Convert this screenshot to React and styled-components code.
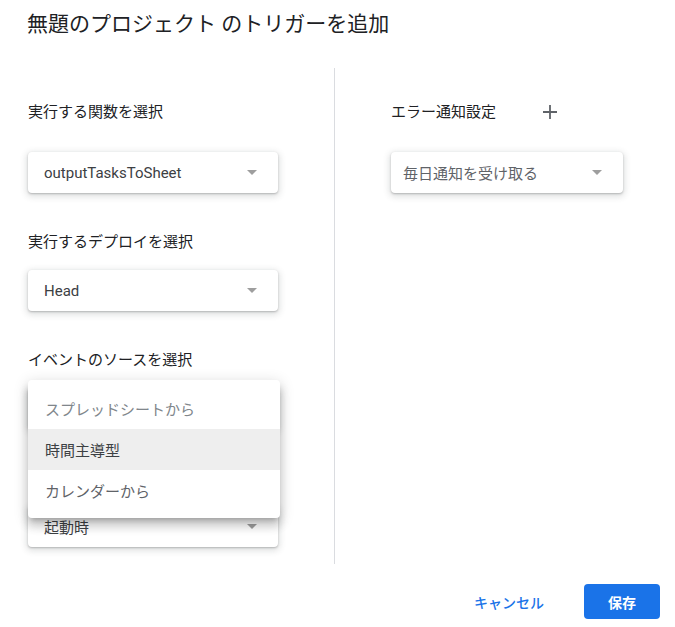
import styled, { createGlobalStyle } from "styled-components";

const GlobalStyle = createGlobalStyle`
    body {
        margin: 0;
        background: #fff;
        font-family: Roboto, "Noto Sans CJK JP", sans-serif;
        color: #202124;
    }
`;

const Dialog = styled.div`
    width: 675px;
    height: 627px;
    box-sizing: border-box;
    padding: 11px 15px 8px 27px;
    display: flex;
    flex-direction: column;
`;

const Title = styled.h2`
    margin: 0;
    font-size: 21px;
    line-height: 27px;
    font-weight: 400;
    color: #202124;
`;

const Body = styled.div`
    display: flex;
    margin-top: 30px;
`;

const Column = styled.div`
    display: flex;
    flex-direction: column;
    width: ${(p) => p.width}px;
    padding: 24px 0 17px ${(p) => p.inset || 0}px;
    box-sizing: border-box;
`;

const Divider = styled.div`
    width: 1px;
    background: #dadce0;
`;

const Field = styled.div`
    display: flex;
    flex-direction: column;
    gap: ${(p) => (p.first ? 20 : 18)}px;
    margin-top: ${(p) => (p.first ? 0 : 37)}px;
    position: relative;
`;

const LabelRow = styled.div`
    display: flex;
    align-items: ${(p) => (p.tall ? "center" : "flex-end")};
    height: ${(p) => (p.tall ? 40 : 22)}px;
`;

const Label = styled.div`
    font-size: 15px;
    line-height: 20px;
    color: #202124;
`;

const IconButton = styled.button`
    width: 40px;
    height: 40px;
    margin-left: 34px;
    border: none;
    background: none;
    padding: 0;
    display: flex;
    align-items: center;
    justify-content: center;
    color: #5f6368;
`;

const SelectBox = styled.div`
    width: ${(p) => p.width}px;
    height: 41px;
    box-sizing: border-box;
    padding: 0 21px 0 ${(p) => p.pad}px;
    display: flex;
    align-items: center;
    justify-content: space-between;
    border-radius: 4px;
    background: #fff;
    box-shadow: 0 1px 2px 0 rgba(60, 64, 67, 0.3), 0 2px 6px 2px rgba(60, 64, 67, 0.15);
    font-size: 15px;
    color: ${(p) => (p.muted ? "#5f6368" : "#3c4043")};
`;

const Arrow = styled.span`
    width: 0;
    height: 0;
    margin-left: auto;
    border-left: 5px solid transparent;
    border-right: 5px solid transparent;
    border-top: 5px solid #9e9e9e;
`;

const Menu = styled.div`
    position: absolute;
    left: 0;
    top: 32px;
    width: 252px;
    padding: 8px 0 7px;
    background: #fff;
    border-radius: 4px;
    box-shadow: 0 5px 5px -3px rgba(0, 0, 0, 0.2), 0 8px 10px 1px rgba(0, 0, 0, 0.14), 0 3px 14px 2px rgba(0, 0, 0, 0.12);
    z-index: 2;
`;

const MenuItem = styled.div`
    height: 41px;
    display: flex;
    align-items: center;
    padding-left: 17px;
    font-size: 15px;
    color: ${(p) => p.color};
    background: ${(p) => (p.active ? "#eeeeee" : "transparent")};
`;

const Footer = styled.div`
    display: flex;
    justify-content: flex-end;
    align-items: center;
    gap: 24px;
    margin-top: 20px;
`;

const TextButton = styled.button`
    border: none;
    background: none;
    padding: 0 16px;
    height: 35px;
    font-family: inherit;
    font-size: 14px;
    font-weight: 500;
    color: #1a73e8;
`;

const PrimaryButton = styled.button`
    border: none;
    border-radius: 4px;
    width: 76px;
    height: 35px;
    background: #1a73e8;
    color: #fff;
    font-family: inherit;
    font-size: 14px;
    font-weight: 700;
`;

const Select = ({ value, width = 250, pad = 16, muted }) => (
    <SelectBox width={width} pad={pad} muted={muted}>
        {value && <span>{value}</span>}
        <Arrow />
    </SelectBox>
);

const App = () => (
    <Dialog>
        <GlobalStyle />
        <Title>無題のプロジェクト のトリガーを追加</Title>
        <Body>
            <Column width={307} inset={1}>
                <Field first>
                    <LabelRow tall>
                        <Label>実行する関数を選択</Label>
                    </LabelRow>
                    <Select value="outputTasksToSheet" />
                </Field>
                <Field>
                    <LabelRow>
                        <Label>実行するデプロイを選択</Label>
                    </LabelRow>
                    <Select value="Head" />
                </Field>
                <Field>
                    <LabelRow>
                        <Label>イベントのソースを選択</Label>
                    </LabelRow>
                    {/* covered by the open menu */}
                    <Select />
                    <Menu>
                        <MenuItem color="#80868b">スプレッドシートから</MenuItem>
                        <MenuItem color="#3c4043" active>時間主導型</MenuItem>
                        <MenuItem color="#5f6368">カレンダーから</MenuItem>
                    </Menu>
                </Field>
                <Field>
                    {/* label hidden under the menu */}
                    <LabelRow />
                    <Select value="起動時" />
                </Field>
            </Column>
            <Divider />
            <Column width={300} inset={56}>
                <Field first>
                    <LabelRow tall>
                        <Label>エラー通知設定</Label>
                        <IconButton aria-label="追加">
                            <svg width="14" height="14" viewBox="0 0 14 14">
                                <path d="M7 0v14M0 7h14" stroke="currentColor" strokeWidth="1.8" fill="none" />
                            </svg>
                        </IconButton>
                    </LabelRow>
                    <Select value="毎日通知を受け取る" width={232} pad={12} muted />
                </Field>
            </Column>
        </Body>
        <Footer>
            <TextButton>キャンセル</TextButton>
            <PrimaryButton>保存</PrimaryButton>
        </Footer>
    </Dialog>
);

export default App;
